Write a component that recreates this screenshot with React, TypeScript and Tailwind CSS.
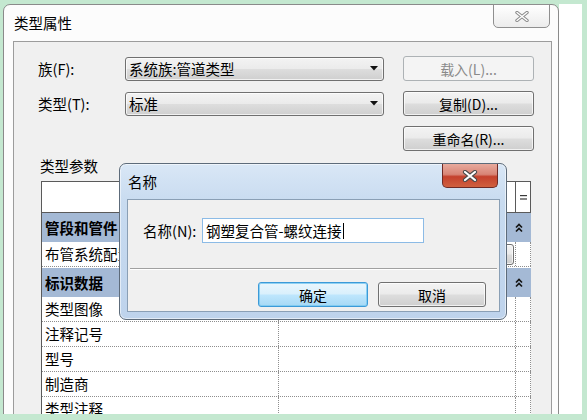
import React from "react";

const btn =
  "flex items-center justify-center border border-[#707070] rounded-[3px] bg-[linear-gradient(#f3f3f3_0%,#ebebeb_48%,#dddddd_52%,#cfcfcf_100%)] shadow-[inset_0_0_0_1px_rgba(255,255,255,0.7)]";

function Arrow() {
  return (
    <svg width="8" height="5" viewBox="0 0 8 5">
      <polygon points="0,0 8,0 4,4.5" fill="#111" />
    </svg>
  );
}

function Chevrons() {
  return (
    <svg width="8" height="10" viewBox="0 0 8 10">
      <path d="M1 4.5 L4 1.5 L7 4.5 M1 8.5 L4 5.5 L7 8.5" stroke="#151515" strokeWidth="1.7" fill="none" />
    </svg>
  );
}

function Select({ text }: { text: string }) {
  return (
    <div className="flex items-center justify-between w-[259px] h-[24px] pl-[3px] pr-[5px] border border-[#707070] rounded-[3px] bg-[linear-gradient(#f3f3f3_0%,#ebebeb_48%,#dddddd_52%,#cfcfcf_100%)] shadow-[inset_0_0_0_1px_rgba(255,255,255,0.7)]">
      <span className="text-[14.5px] leading-[20px]">{text}</span>
      <Arrow />
    </div>
  );
}

function DataRow({ name, extra }: { name: string; extra?: boolean }) {
  return (
    <div className="flex h-[25px] bg-white border-b border-dotted border-[#8e8e8e]">
      <div className="w-[237px] border-r border-dotted border-[#8e8e8e] pl-[3px] flex items-center text-[14.5px] leading-[20px] whitespace-nowrap overflow-hidden">
        {name}
      </div>
      <div className="w-[237px] border-r border-dotted border-[#8e8e8e] flex items-center justify-end pr-[1px]">
        {extra && (
          <div className={`${btn} w-[70px] h-[21px] text-[12px]`}>编辑...</div>
        )}
      </div>
      <div className="w-[15px] border-r border-dotted border-[#8e8e8e]" />
    </div>
  );
}

function GroupRow({ name, h }: { name: string; h: string }) {
  return (
    <div className={`flex items-center justify-between bg-[#a4b9d5] ${h} pl-[3px] pr-[8px]`}>
      <span className="text-[14.5px] leading-[20px] font-bold">{name}</span>
      <Chevrons />
    </div>
  );
}

function Window() {
  return (
    <div className="relative w-[556px] h-[440px] shrink-0 border border-[#8a8a8a] rounded-t-[7px] bg-[#fcfcfc] flex flex-col">
      <div className="h-[36px] pl-[10px] flex items-center text-[14.5px] leading-[20px]">类型属性</div>
      <div className="absolute top-[-1px] right-[8px] w-[57px] h-[24px] border border-[#8f8f8f] rounded-b-[5px] bg-[linear-gradient(#ffffff,#ececec)] flex items-center justify-center">
        <svg width="14" height="11" viewBox="0 0 14 11">
          <path d="M2 1.5 L12 9.5 M12 1.5 L2 9.5" stroke="#8a8a8a" strokeWidth="3.4" strokeLinecap="round" />
          <path d="M2 1.5 L12 9.5 M12 1.5 L2 9.5" stroke="#ffffff" strokeWidth="1.4" strokeLinecap="round" />
        </svg>
      </div>
      <div className="ml-[9px] mr-[6px] flex-1 border border-[#9c9c9c] bg-[#f0f0f0] flex flex-col">
        <div className="flex pt-[14px] pl-[24px]">
          <div className="flex flex-col gap-[10px]">
            <div className="flex items-center h-[25px]">
              <span className="w-[87px] text-[14.5px] leading-[20px]">族(F):</span>
              <Select text="系统族:管道类型" />
            </div>
            <div className="flex items-center h-[25px]">
              <span className="w-[87px] text-[14.5px] leading-[20px]">类型(T):</span>
              <Select text="标准" />
            </div>
          </div>
          <div className="ml-[19px] flex flex-col gap-[10px]">
            <div className="flex items-center justify-center w-[131px] h-[25px] border border-[#adb2b5] rounded-[3px] bg-[#f4f4f4] text-[#8a8a8a] text-[14px] leading-[20px]">
              载入(L)...
            </div>
            <div className={`${btn} w-[131px] h-[25px] text-[14px] leading-[20px]`}>复制(D)...</div>
            <div className={`${btn} w-[131px] h-[25px] text-[14px] leading-[20px]`}>重命名(R)...</div>
          </div>
        </div>
        <div className="ml-[26px] mt-[5px] h-[20px] text-[14.5px] leading-[20px]">类型参数</div>
        <div className="ml-[27px] mt-[5px] w-[490px] border-l border-[#5a5a5a] flex flex-col">
          <div className="flex h-[32px] bg-white border-t border-b border-[#5a5a5a]">
            <div className="w-[237px] flex items-center justify-center text-[14px]">参数</div>
            <div className="w-[237px] border-r border-[#5a5a5a] flex items-center justify-center text-[14px]">值</div>
            <div className="w-[15px] border-r border-[#5a5a5a] flex items-center justify-center">
              <svg width="7" height="5" viewBox="0 0 7 5">
                <rect x="0" y="0" width="7" height="1.2" fill="#3a3a3a" />
                <rect x="0" y="3.4" width="7" height="1.2" fill="#3a3a3a" />
              </svg>
            </div>
          </div>
          <GroupRow name="管段和管件" h="h-[29px]" />
          <DataRow name="布管系统配置" extra />
          <div className="h-[1px] bg-white" />
          <GroupRow name="标识数据" h="h-[29px]" />
          <DataRow name="类型图像" />
          <DataRow name="注释记号" />
          <DataRow name="型号" />
          <DataRow name="制造商" />
          <DataRow name="类型注释" />
        </div>
      </div>
    </div>
  );
}

function NameDialog() {
  return (
    <div className="absolute left-[119px] top-[163px] w-[388px] h-[157px] border border-[#5d6b7a] rounded-[7px] bg-[linear-gradient(180deg,#d9e7f6_0%,#c8dbf0_25%,#bed3ec_100%)] shadow-[inset_0_0_0_1px_rgba(255,255,255,0.55)] flex flex-col px-[7px] pb-[7px] pr-[6px]">
      <div className="h-[35px] pl-[1px] flex items-center text-[14.5px] leading-[20px]">名称</div>
      <div className="absolute top-0 right-[8px] w-[56px] h-[24px] border border-[#6e2a25] border-t-0 rounded-b-[5px] bg-[linear-gradient(#e8aa9d_0%,#d88576_45%,#c4412d_55%,#d0603f_100%)] flex items-center justify-center">
        <svg width="16" height="12" viewBox="0 0 16 12">
          <path d="M3 2 L13 10 M13 2 L3 10" stroke="#4a4a4a" strokeWidth="4.2" strokeLinecap="round" />
          <path d="M3 2 L13 10 M13 2 L3 10" stroke="#ffffff" strokeWidth="2.2" strokeLinecap="round" />
        </svg>
      </div>
      <div className="flex-1 border border-[#8a9fb5] bg-[#f0f0f0] flex flex-col">
        <div className="flex items-center pl-[15px] mt-[18px]">
          <span className="w-[59px] text-[14.5px] leading-[20px]">名称(N):</span>
          <div className="w-[222px] h-[25px] border border-[#8cbbe6] bg-white flex items-center pl-[3px]">
            <span className="text-[14.5px] leading-[20px] whitespace-nowrap">钢塑复合管-螺纹连接</span>
            <span className="w-[1px] h-[16px] bg-black ml-[1px]" />
          </div>
        </div>
        <div className="mx-[2px] mt-[25px] h-[2px] border-t border-[#a0a0a0] border-b border-b-white" />
        <div className="flex justify-end gap-[10px] pr-[13px] mt-[12px]">
          <div className="w-[110px] h-[25px] rounded-[3px] border border-[#3c9ad8] bg-[linear-gradient(#eaf6fd_0%,#d9f0fc_48%,#bee6fd_52%,#a7d9f5_100%)] shadow-[inset_0_0_0_1px_rgba(120,200,240,0.8)] flex items-center justify-center text-[14px] leading-[20px]">
            确定
          </div>
          <div className={`${btn} w-[108px] h-[25px] text-[14px] leading-[20px]`}>取消</div>
        </div>
      </div>
    </div>
  );
}

export default function App() {
  return (
    <div className="relative w-[587px] h-[420px] bg-[#c4e8d0] pt-[4px] pl-[3px] font-['Noto_Sans_CJK_SC','Microsoft_YaHei',sans-serif] text-black">
      <div className="flex h-[410px] overflow-hidden">
        <Window />
        <div className="w-[23px] bg-white" />
      </div>
      <NameDialog />
    </div>
  );
}
